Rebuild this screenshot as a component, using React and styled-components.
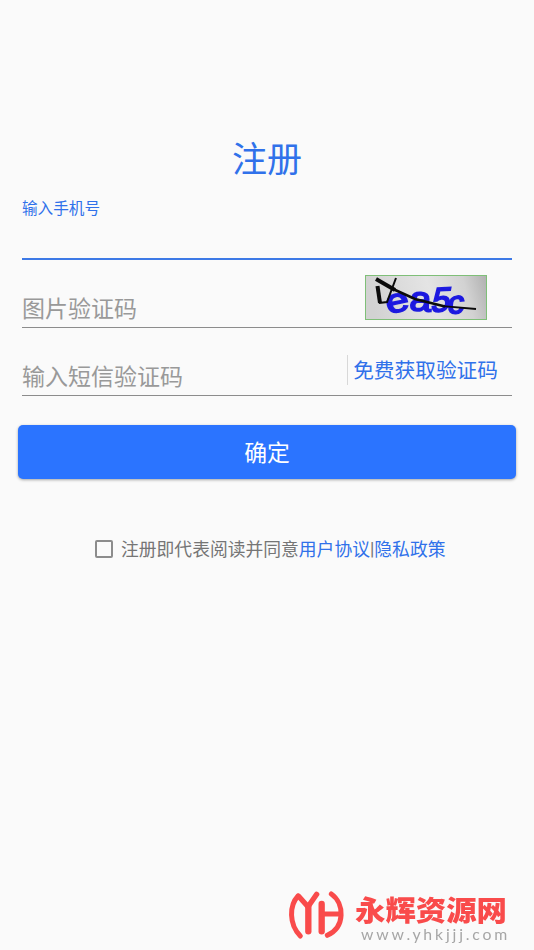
import React from 'react';
import styled, { createGlobalStyle } from 'styled-components';

const link = '#';

const App = () => {
    return (
        <Page>
            <GlobalStyle />
            <Title>注册</Title>
            <Form>
                <PhoneField>
                    <Label>输入手机号</Label>
                </PhoneField>
                <Field>
                    <Hint>图片验证码</Hint>
                    <Captcha />
                </Field>
                <Field>
                    <Hint>输入短信验证码</Hint>
                    <SendCode>免费获取验证码</SendCode>
                </Field>
            </Form>
            <Submit>确定</Submit>
            <Agreement>
                <Checkbox />
                <span>注册即代表阅读并同意</span>
                <Link href={link}>用户协议</Link>
                <Divider>|</Divider>
                <Link href={link}>隐私政策</Link>
            </Agreement>
            <Brand>
                <BrandLogo />
                <BrandText>
                    <BrandName>永辉资源网</BrandName>
                    <BrandUrl>www.yhkjjj.com</BrandUrl>
                </BrandText>
            </Brand>
        </Page>
    );
};

const Captcha = () => (
    <CaptchaImage viewBox="0 0 122 45">
        <defs>
            <linearGradient id="paper" x1="0" y1="0.1" x2="1" y2="0">
                <stop offset="0" stopColor="#d2d2d2" />
                <stop offset="0.5" stopColor="#e4e4e4" />
                <stop offset="0.8" stopColor="#d2d2d2" />
                <stop offset="1" stopColor="#b0b0b0" />
            </linearGradient>
            <filter id="soft"><feGaussianBlur stdDeviation="0.7" /></filter>
        </defs>
        <rect x="0.5" y="0.5" width="121" height="44" fill="url(#paper)" stroke="#7fbf78" />
        <g fontFamily="Liberation Sans, sans-serif" fontWeight="400" fill="#1c1ae0" stroke="#1c1ae0" strokeWidth="1.8" filter="url(#soft)">
            <text transform="translate(23 39) rotate(-12) scale(1.25 1)" fontSize="33">e</text>
            <text transform="translate(44 35) rotate(4) scale(1.15 1)" fontSize="34">a</text>
            <text transform="translate(65 37) rotate(-3) skewX(-14) scale(1 1)" fontSize="34">5</text>
            <text transform="translate(82 39) rotate(-4) skewX(-8) scale(1.05 1)" fontSize="32">c</text>
        </g>
        <g fill="none" stroke="#0b0b0b">
            <path d="M11 4 L30 15" strokeWidth="4" />
            <path d="M28 14 L50 24 L80 31.5" strokeWidth="2.6" />
            <path d="M78 31.2 L111 34" strokeWidth="1.8" />
            <path d="M12.5 11 L15 28" strokeWidth="4" />
            <path d="M14 28 L22 27 L31 3" strokeWidth="2" />
        </g>
    </CaptchaImage>
);

const BrandLogo = () => (
    <Logo viewBox="0 0 186 162" fill="none" stroke="#f94b4b" strokeWidth="15" strokeLinecap="round" strokeLinejoin="round">
        <path d="M36 24 C10 52 8 108 43 144" />
        <path d="M38 25 L66 56 L92 19" strokeWidth="16" />
        <path d="M67 54 V130" strokeWidth="19" />
        <path d="M107 48 V130" strokeWidth="19" />
        <path d="M107 78 H162" strokeWidth="15" />
        <path d="M136 18 C176 46 178 118 124 142" />
    </Logo>
);

export default App;

const GlobalStyle = createGlobalStyle`
    body {
        margin: 0;
        background: #fafafa;
        font-family: "Noto Sans CJK SC", sans-serif;
    }
`

const Page = styled.main`
    width: 534px;
    height: 950px;
    display: flex;
    flex-direction: column;
    overflow: hidden;
    background: #fafafa;
`

const Title = styled.h1`
    margin: 131px 0 0;
    height: 52px;
    line-height: 52px;
    color: #3071ea;
    font-size: 35px;
    font-weight: 400;
    text-align: center;
`

const Form = styled.section`
    margin: 12px 22px 0;
`

const PhoneField = styled.div`
    height: 63px;
    border-bottom: 2px solid #3d79e6;
`

const Label = styled.div`
    line-height: 24px;
    color: #3071ea;
    font-size: 15.6px;
`

const Field = styled.div`
    height: 67px;
    box-sizing: content-box;
    display: flex;
    align-items: center;
    justify-content: space-between;
    border-bottom: 1px solid #8c8c8c;
`

const Hint = styled.span`
    margin-top: 27px;
    line-height: 30px;
    color: #999;
    font-size: 23px;
`

const CaptchaImage = styled.svg`
    width: 122px;
    height: 45px;
    margin: 8px 25px 0 0;
`

const SendCode = styled.button`
    height: 30px;
    margin: 16px 14px 0 0;
    padding: 0 0 2px 5px;
    border: 0;
    border-left: 1px solid #d8d8d8;
    background: none;
    color: #3071ea;
    font-family: inherit;
    font-size: 20.7px;
    line-height: 28px;
`

const Submit = styled.button`
    height: 54px;
    margin: 29px 18px 0;
    padding: 0 0 1px;
    border: 0;
    border-radius: 5px;
    background: #2b74ff;
    box-shadow: 0 1px 3px rgba(0, 0, 0, 0.35);
    color: #fff;
    font-family: inherit;
    font-size: 22.8px;
`

const Agreement = styled.div`
    display: flex;
    align-items: center;
    height: 28px;
    margin: 55px 0 0 95px;
    color: #757575;
    font-size: 17.8px;
    white-space: nowrap;
`

const Checkbox = styled.span`
    width: 18px;
    height: 18px;
    margin: 1px 8px 0 0;
    box-sizing: border-box;
    border: 2px solid #8c8c8c;
    border-radius: 2px;
`

const Link = styled.a`
    color: #3071ea;
    text-decoration: none;
`

const Divider = styled.span`
    font-family: Roboto, sans-serif;
`

const Brand = styled.footer`
    display: flex;
    margin: auto 0 0 286px;
    height: 62px;
`

const Logo = styled.svg`
    width: 62px;
    height: 54px;
`

const BrandText = styled.div`
    margin-left: 7px;
    white-space: nowrap;
`

const BrandName = styled.div`
    height: 36px;
    margin-top: 3px;
    line-height: 36px;
    color: #f94b4b;
    font-size: 30.4px;
    font-weight: 900;
    transform: scaleY(0.95);
`

const BrandUrl = styled.div`
    margin: 1px 0 0 6px;
    line-height: 14px;
    color: #a6a6a6;
    font-family: Lato, sans-serif;
    font-size: 14.5px;
    letter-spacing: 2.6px;
    transform: scaleX(1.09);
    transform-origin: left;
`
